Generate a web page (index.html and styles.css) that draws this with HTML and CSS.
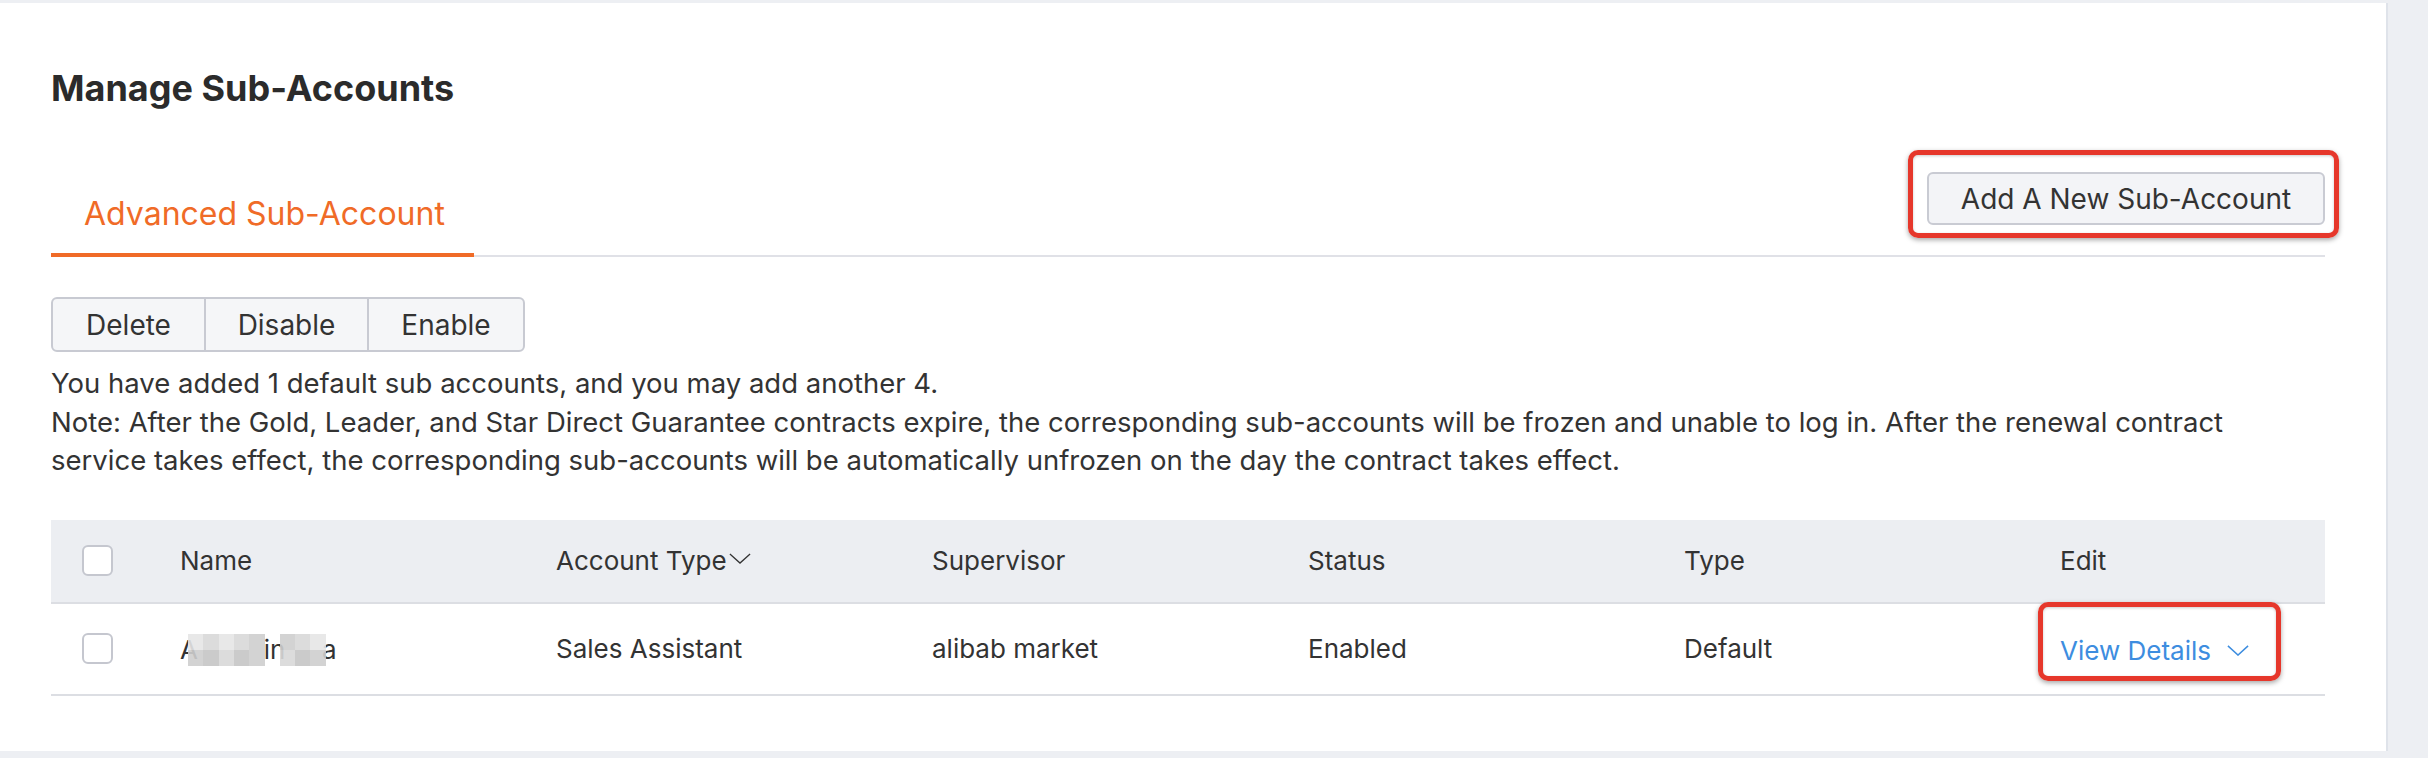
FILE: index.html
```html
<!DOCTYPE html>
<html lang="en">
<head>
<meta charset="utf-8">
<title>Manage Sub-Accounts</title>
<link rel="stylesheet" href="styles.css">
</head>
<body>
<div class="page">
  <main class="card">
    <h1 class="title">Manage Sub-Accounts</h1>

    <div class="tabs-row">
      <div class="tab tab-active">Advanced Sub-Account</div>
      <div class="tab-actions">
        <span class="mark mark-add"><button class="btn btn-add" type="button">Add A New Sub-Account</button></span>
      </div>
    </div>

    <div class="btn-group">
      <button class="btn-seg" type="button">Delete</button>
      <button class="btn-seg" type="button">Disable</button>
      <button class="btn-seg" type="button">Enable</button>
    </div>

    <p class="info">You have added 1 default sub accounts, and you may add another 4.<br>Note: After the Gold, Leader, and Star Direct Guarantee contracts expire, the corresponding sub-accounts will be frozen and unable to log in. After the renewal contract service takes effect, the corresponding sub-accounts will be automatically unfrozen on the day the contract takes effect.</p>

    <table class="grid">
      <colgroup>
        <col class="c-check">
        <col class="c-col">
        <col class="c-col">
        <col class="c-col">
        <col class="c-col">
        <col class="c-col">
        <col>
      </colgroup>
      <thead>
        <tr>
          <th class="cell-check"><span class="checkbox"></span></th>
          <th>Name</th>
          <th><span class="sortable">Account Type<svg class="caret-sm" viewBox="0 0 24 12" aria-hidden="true"><path d="M1 1 L12 11 L23 1" fill="none" stroke="#333" stroke-width="1.4"/></svg></span></th>
          <th>Supervisor</th>
          <th>Status</th>
          <th>Type</th>
          <th>Edit</th>
        </tr>
      </thead>
      <tbody>
        <tr>
          <td class="cell-check"><span class="checkbox"></span></td>
          <td>
            <span class="blurred" aria-label="hidden name">
              <span class="blur-text">A&nbsp;&nbsp;&nbsp;&nbsp;&nbsp;&nbsp;&nbsp;&nbsp;&nbsp;in&nbsp;&nbsp;&nbsp;&nbsp;&nbsp;a</span>
              <span class="blur-blocks">
                <i class="b1"></i><i class="b2"></i><i class="b1"></i><i class="b2"></i><i class="b3"></i><i class="b0"></i><i class="b3"></i><i class="b2"></i><i class="b1"></i><i class="b0"></i>
                <i class="b3"></i><i class="b4"></i><i class="b2"></i><i class="b4"></i><i class="b3"></i><i class="b0"></i><i class="b2"></i><i class="b4"></i><i class="b3"></i><i class="b0"></i>
              </span>
            </span>
          </td>
          <td>Sales Assistant</td>
          <td>alibab market</td>
          <td>Enabled</td>
          <td>Default</td>
          <td>
            <span class="mark mark-view"><a class="link" href="#">View Details<svg class="caret" viewBox="0 0 24 12" aria-hidden="true"><path d="M1 1 L12 11 L23 1" fill="none" stroke="#3d8ddf" stroke-width="1.6"/></svg></a></span>
          </td>
        </tr>
      </tbody>
    </table>
  </main>
</div>
</body>
</html>
```

FILE: styles.css
```css
* { box-sizing: border-box; }

html, body {
  margin: 0;
  padding: 0;
}

body {
  background: #edeff3;
  font-family: Inter, "Noto Sans", "Liberation Sans", sans-serif;
  color: #333333;
  width: 2428px;
  height: 758px;
  overflow: hidden;
}

.page {
  padding-top: 3px;
  display: flex;
}

.card {
  width: 2388px;
  height: 748px;
  background: #ffffff;
  border-right: 2px solid #dfe3ea;
  padding: 63px 61px 0 51px;
  display: flex;
  flex-direction: column;
}

.title {
  margin: 0;
  font-size: 36px;
  line-height: 44px;
  font-weight: 700;
  color: #2b2b2b;
}

.tabs-row {
  margin-top: 20px;
  display: flex;
  justify-content: space-between;
  align-items: flex-start;
  border-bottom: 2px solid #e0e1e7;
  height: 127px;
}

.tab {
  font-size: 32px;
  line-height: 40px;
  padding: 64px 31px 20px 33px;
  width: 423px;
  white-space: nowrap;
}

.tab-active {
  color: #f06b27;
  border-bottom: 4px solid #f06b27;
  margin-bottom: -2px;
  height: 127px;
}

.tab-actions {
  padding-top: 42px;
}

.btn {
  font-family: inherit;
  font-size: 28px;
  line-height: 34px;
  color: #333333;
  background: #f3f4f7;
  border: 2px solid #c9cbd3;
  border-radius: 6px;
  padding: 0;
  height: 53px;
  width: 398px;
  white-space: nowrap;
  text-align: center;
  cursor: pointer;
}

.mark {
  position: relative;
  display: inline-block;
}

.mark::after {
  content: "";
  position: absolute;
  border: 5px solid #e6372b;
  border-radius: 10px;
  box-shadow: 0 2px 5px rgba(0, 0, 0, 0.35), inset 0 1px 3px rgba(0, 0, 0, 0.2);
  pointer-events: none;
}

.mark-add::after {
  top: -22px;
  bottom: -13px;
  left: -19px;
  right: -14px;
}

.btn-group {
  margin-top: 40px;
  display: flex;
  align-self: flex-start;
  border: 2px solid #c8cad2;
  border-radius: 6px;
  background: #f5f6f8;
  overflow: hidden;
}

.btn-seg {
  font-family: inherit;
  font-size: 28px;
  line-height: 34px;
  color: #333333;
  background: transparent;
  border: none;
  border-left: 2px solid #c8cad2;
  height: 51px;
  padding: 0;
  text-align: center;
}

.btn-seg:first-child { border-left: none; width: 151px; }
.btn-seg:nth-child(2) { width: 163px; }
.btn-seg:nth-child(3) { width: 156px; }

.info {
  margin: 12px 0 0;
  font-size: 27.5px;
  line-height: 38.6px;
  color: #333333;
}

.grid {
  margin-top: 40px;
  width: 100%;
  border-collapse: collapse;
  table-layout: fixed;
  font-size: 26px;
  color: #333333;
}

.c-check { width: 129px; }
.c-col { width: 376px; }

.grid th {
  background: #eceef2;
  font-weight: 400;
  text-align: left;
  height: 83px;
  padding: 0;
  border-bottom: 2px solid #dcdee3;
  white-space: nowrap;
}

.grid td {
  height: 92px;
  padding: 0;
  border-bottom: 2px solid #dcdee3;
  white-space: nowrap;
}

.cell-check {
  padding-left: 31px !important;
}

.checkbox {
  display: block;
  width: 31px;
  height: 31px;
  border: 2px solid #c5c7cf;
  border-radius: 6px;
  background: #ffffff;
}

.sortable {
  display: inline-flex;
  align-items: center;
}

.caret-sm {
  width: 22px;
  height: 11px;
  margin-left: 2px;
  margin-top: -4px;
}

.blurred {
  position: relative;
  display: inline-block;
  width: 161px;
  height: 32px;
  vertical-align: middle;
}

.blur-text {
  position: absolute;
  left: 0;
  top: -1px;
  font-size: 26px;
  line-height: 34px;
  color: #333333;
}

.blur-blocks {
  position: absolute;
  left: 8px;
  top: 0;
  width: 153px;
  height: 32px;
  display: grid;
  grid-template-columns: repeat(10, 1fr);
  grid-template-rows: 1fr 1fr;
  opacity: 0.9;
}

.blur-blocks i { display: block; }
.b0 { background: transparent; }
.b1 { background: #e6e6e6; }
.b2 { background: #d9d9d9; }
.b3 { background: #cfcfcf; }
.b4 { background: #c6c6c6; }

.link {
  display: inline-flex;
  align-items: center;
  color: #3d8ddf;
  text-decoration: none;
  font-size: 26px;
  line-height: 34px;
  padding-top: 4px;
}

.caret {
  width: 22px;
  height: 11px;
  margin-left: 16px;
}

.mark-view::after {
  top: -28px;
  bottom: -13px;
  left: -22px;
  right: -32px;
}
```
